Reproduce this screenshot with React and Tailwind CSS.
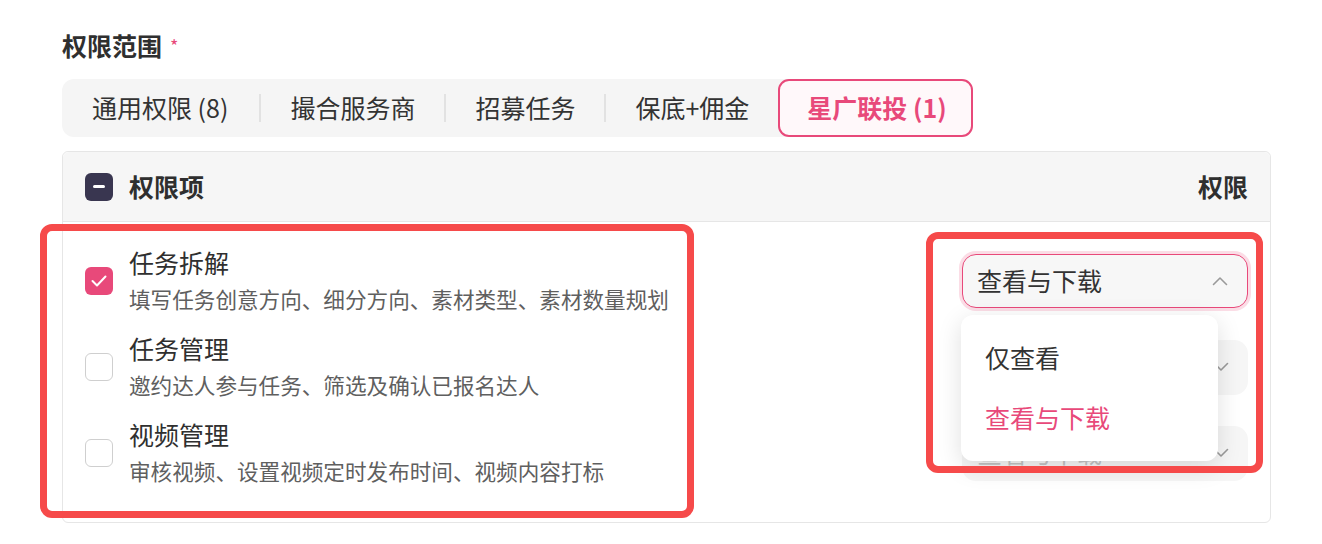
import React from "react";

const rows = [
  { title: "任务拆解", desc: "填写任务创意方向、细分方向、素材类型、素材数量规划", checked: true },
  { title: "任务管理", desc: "邀约达人参与任务、筛选及确认已报名达人", checked: false },
  { title: "视频管理", desc: "审核视频、设置视频定时发布时间、视频内容打标", checked: false },
];

const tabs = [
  { t: "通用权限 (8)", cls: "pl-[30px] pr-[31px]" },
  { t: "撮合服务商", cls: "pl-[29px] pr-[29px]" },
  { t: "招募任务", cls: "pl-[29px] pr-[29px]" },
  { t: "保底+佣金", cls: "pl-[29px] pr-[29px]" },
];

function ChevronUp() {
  return (
    <svg width="16" height="10" viewBox="0 0 16 10" fill="none">
      <polyline points="1.5,8.5 8,2 14.5,8.5" stroke="#9a9a9a" strokeWidth="1.6" strokeLinecap="round" strokeLinejoin="round" />
    </svg>
  );
}

function ChevronDown() {
  return (
    <svg width="16" height="10" viewBox="0 0 16 10" fill="none">
      <polyline points="1.5,1.5 8,8 14.5,1.5" stroke="#9a9a9a" strokeWidth="1.6" strokeLinecap="round" strokeLinejoin="round" />
    </svg>
  );
}

function Checkbox({ checked }) {
  if (checked) {
    return (
      <div className="w-[28px] h-[28px] rounded-[6px] bg-[#e8497a] flex items-center justify-center shrink-0">
        <svg width="16" height="12" viewBox="0 0 16 12" fill="none">
          <polyline points="1.5,6 6,10.5 14.5,1.5" stroke="#fff" strokeWidth="2" strokeLinecap="round" strokeLinejoin="round" />
        </svg>
      </div>
    );
  }
  return <div className="w-[28px] h-[28px] rounded-[6px] border border-[#cfcfcf] bg-white shrink-0" />;
}

export default function App() {
  return (
    <div className="relative w-[1322px] h-[544px] bg-white pl-[62px] pt-[29px] font-['Noto_Sans_CJK_SC','Noto_Sans',sans-serif] text-[#333]">
      {/* Title */}
      <div className="h-[32px] flex items-center gap-[8px]">
        <span className="text-[25px] font-bold text-[#2f2f2f] leading-none">权限范围</span>
        <span className="text-[18px] text-[#e8497a] leading-none">*</span>
      </div>

      {/* Tabs */}
      <div className="mt-[18px] inline-flex items-stretch h-[58px] bg-[#f5f5f5] rounded-[12px]">
        {tabs.map((tab, i) => (
          <React.Fragment key={tab.t}>
            <div className={`flex items-center ${tab.cls} text-[25px] text-[#333] whitespace-nowrap`}>{tab.t}</div>
            {i < tabs.length - 1 && (
              <div className="self-center w-[2px] h-[28px] bg-[#e2e2e2]" />
            )}
          </React.Fragment>
        ))}
        <div className="flex items-center pl-[27px] pr-[24px] border-2 border-[#e8497a] rounded-[11px] bg-[#fff8fa] text-[25px] font-bold text-[#e8497a] whitespace-nowrap">
          星广联投 (1)
        </div>
      </div>

      {/* Table */}
      <div className="mt-[14px] w-[1209px] h-[372px] border border-[#e6e6e6] rounded-[6px]">
        <div className="h-[70px] px-[22px] flex items-center justify-between bg-[#f6f6f6] border-b border-[#e6e6e6] rounded-t-[6px]">
          <div className="flex items-center gap-[16px]">
            <div className="w-[28px] h-[28px] rounded-[6px] bg-[#393650] flex items-center justify-center">
              <div className="w-[12px] h-[3px] rounded-full bg-white" />
            </div>
            <span className="text-[25px] font-bold text-[#2f2f2f]">权限项</span>
          </div>
          <span className="text-[25px] font-bold text-[#2f2f2f]">权限</span>
        </div>

        <div className="pt-[22px] px-[22px] flex flex-col gap-[12px]">
          {rows.map((r, i) => (
            <div key={r.title} className="h-[74px] flex items-center justify-between">
              <div className="flex items-center gap-[16px]">
                <Checkbox checked={r.checked} />
                <div className="flex flex-col">
                  <div className="h-[36px] leading-[36px] text-[25px] text-[#2f2f2f]">{r.title}</div>
                  <div className="h-[38px] leading-[38px] text-[21.6px] text-[#5f5f5f]">{r.desc}</div>
                </div>
              </div>
              {i === 0 ? (
                <div className="relative">
                  <div className="w-[286px] h-[54px] rounded-[14px] border border-[#e8497a] bg-[#f7f7f7] shadow-[0_0_0_3px_#fbdde6] flex items-center justify-between pl-[14px] pr-[19px]">
                    <span className="text-[25px] text-[#333]">查看与下载</span>
                    <ChevronUp />
                  </div>
                  <div className="absolute z-10 left-[-1px] top-[61px] w-[257px] py-[13px] bg-white rounded-[12px] shadow-[0_6px_24px_rgba(0,0,0,0.13)]">
                    <div className="h-[60px] flex items-center px-[24px] text-[25px] text-[#333]">仅查看</div>
                    <div className="h-[60px] flex items-center px-[24px] text-[25px] text-[#e8497a]">查看与下载</div>
                  </div>
                </div>
              ) : (
                <div className="w-[286px] h-[55px] rounded-[14px] bg-[#f6f6f6] flex items-center justify-between pl-[15px] pr-[19px]">
                  <span className="text-[25px] text-[#c4c4c4]">查看与下载</span>
                  <ChevronDown />
                </div>
              )}
            </div>
          ))}
        </div>
      </div>

      {/* Annotation boxes */}
      <div className="absolute left-[40px] top-[224px] w-[654px] h-[294px] border-[7px] border-[#f64a4a] rounded-[12px] pointer-events-none z-20" />
      <div className="absolute left-[926px] top-[232px] w-[337px] h-[241px] border-[7px] border-[#f64a4a] rounded-[12px] pointer-events-none z-20" />
    </div>
  );
}
